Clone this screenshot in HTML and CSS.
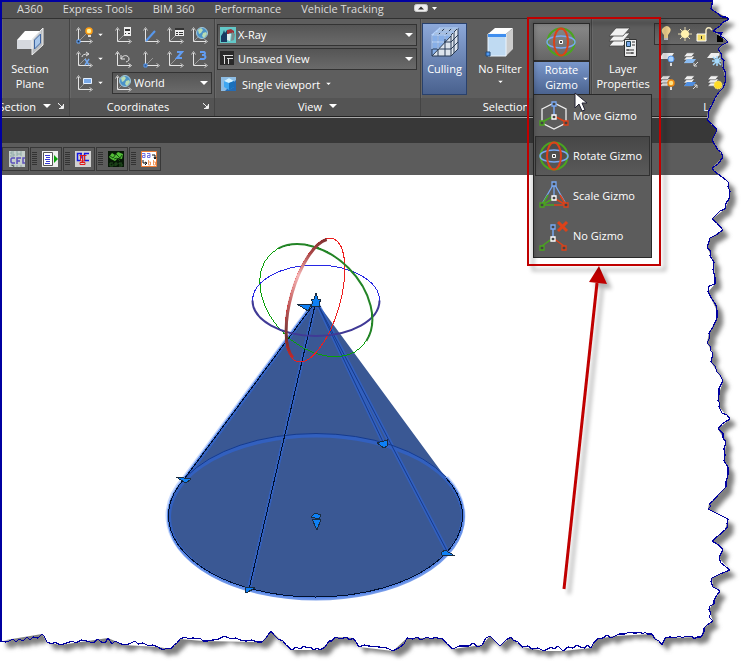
FILE: index.html
```html
<!DOCTYPE html>
<html lang="en">
<head>
<meta charset="utf-8">
<title>Gizmo selection</title>
<link rel="stylesheet" href="styles.css">
</head>
<body>
<svg class="defs" aria-hidden="true">
  <defs>
    <symbol id="axes" viewBox="0 0 17 17"><path d="M2.500 2v12.500H15" fill="none" stroke="#e4e4e4"/><path d="M.5 3.500 2.500.5l2 3M13.500 12.500l3 2-3 2" fill="none" stroke="#c8c8c8"/><path d="m3 14 7-7" stroke="#999" fill="none"/></symbol>
    <symbol id="globe" viewBox="0 0 12 12"><circle cx="6" cy="6" r="5.500" fill="#4b93c8" stroke="#a3c9dd"/><path d="M2 3 5 1l2 2-2 3-2 1zM7 6l3-1 1 2-3 4-2-2z" fill="#b9dcb2"/></symbol>
    <symbol id="rotate" viewBox="0 0 30 30"><circle cx="15" cy="15" r="13.500" fill="none" stroke="#4aa51f" stroke-width="2"/><ellipse cx="15" cy="15" rx="14" ry="6" fill="none" stroke="#78a8f2" stroke-width="1.500"/><ellipse cx="15" cy="15" rx="7" ry="13.500" fill="none" stroke="#dc4219" stroke-width="2"/><path d="M13.500 13.500h3v3h-3z" fill="#444" stroke="#fff"/></symbol>
    <symbol id="sheets" viewBox="0 0 20 20"><g fill="#f0f0f0" stroke="#444" stroke-width=".8"><path d="m1 18 5-6h12l-5 6z"/><path d="m1 13 5-6h12l-5 6z"/><path d="m1 8 5-6h12l-5 6z"/></g></symbol>
    <symbol id="down" viewBox="0 0 8 5"><path d="M0 0h8L4 4z" fill="#fff"/></symbol>
    <symbol id="launch" viewBox="0 0 6 6"><path d="M0 1.500V.5h1M1 1l3 3M5.500 1v4.500H1" fill="none" stroke="#eee"/><path d="M5 2v3H2z" fill="#eee"/></symbol>
  </defs>
</svg>
<div class="stage">
  <header class="app">
    <nav class="tabs">
      <a href="#a360">A360</a><a href="#express">Express Tools</a><a href="#bim">BIM 360</a><a href="#performance">Performance</a><a href="#vehicle">Vehicle Tracking</a>
      <button class="pill" aria-label="Minimize ribbon"><svg width="24" height="9" viewBox="0 0 24 9"><rect x=".5" y=".5" width="13" height="7" rx="2" fill="#eee" stroke="#ccc"/><path d="m4 5.500 3-3 3 3z" fill="#333"/><path d="M18 3h5l-2.500 3z" fill="#fff"/></svg></button>
    </nav>
    <div class="ribbon">
      <section class="panel section">
        <div class="body">
          <button class="big"><svg width="30" height="30" viewBox="0 0 30 30"><path d="M2 13 10 4h16l-8 9z" fill="#fff"/><path d="M2 13h16v9H2z" fill="#d5d8de"/><path d="m18 13 8-9v9l-8 9z" fill="#aaa"/><path d="m17 12 11-11v17L17 28z" fill="#d9dde2" fill-opacity=".75" stroke="#eee"/><path d="m19.500 13 6-6v9l-6 6z" fill="#a9c7ea" stroke="#3e65a0"/></svg><span>Section<br>Plane</span></button>
        </div>
        <div class="title"><span>Section</span><svg width="8" height="5"><use href="#down"/></svg><svg width="6" height="6"><use href="#launch"/></svg></div>
      </section>
      <section class="panel coords">
        <div class="body coord-grid">
          <button class="tool wide" aria-label="UCS"><svg width="17" height="17" viewBox="0 0 17 17"><use href="#axes" width="17" height="17"/><path d="M1 13h3v3H1z" fill="#234" stroke="#62a5ff"/><circle cx="13" cy="4" r="3" fill="#fff29b" stroke="#ff9d14" stroke-width="1.500"/><path d="M12 8h3v2h-3z" fill="#ddd"/></svg><svg class="tiny" viewBox="0 0 8 5"><use href="#down"/></svg></button>
          <button class="tool" aria-label="Named UCS"><svg width="17" height="17" viewBox="0 0 17 17"><use href="#axes"/><path d="M9 0h7v9H9z" fill="#eee"/><path d="M10 2h5v2h-5zM10 6h1v1h-1zM13 6h2v1h-2z" fill="#333"/></svg></button>
          <button class="tool" aria-label="World UCS"><svg width="17" height="17"><use href="#axes"/><path d="m3 14 9-10" stroke="#5798ed" stroke-width="2"/></svg></button>
          <button class="tool" aria-label="UCS list"><svg width="17" height="17"><use href="#axes"/><path d="M8 1h9v8H8z" fill="#eee"/><path d="M8 1h9v2H8zM9 5h2v1H9zM12 5h4v1h-4zM9 7h2v1H9zM12 7h4v1h-4z" fill="#333"/></svg></button>
          <button class="tool" aria-label="World"><svg width="17" height="17"><use href="#axes"/><use href="#globe" x="5" width="12" height="12"/></svg></button>
          <button class="tool wide" aria-label="Rotate X"><svg width="17" height="17"><use href="#axes"/><path d="M6 6q0-3 6-3M10 1l3 2-3 2" fill="none" stroke="#e4e4e4"/><path d="m9 8 4 6m0-6-4 6" fill="none" stroke="#72a8ef" stroke-width="1.500"/></svg><svg class="tiny" viewBox="0 0 8 5"><use href="#down"/></svg></button>
          <button class="tool" aria-label="Previous UCS"><svg width="17" height="17"><path d="M2.500 2v12.500H15M.5 3.500 2.500.5l2 3M13.500 12.500l3 2-3 2M6 4v4h4M6 8c2-5 8-4 8 0 0 2-1 2-3 3" fill="none" stroke="#e4e4e4"/></svg></button>
          <button class="tool" aria-label="Origin"><svg width="17" height="17"><use href="#axes"/><path d="M1 13h3v3H1z" fill="#355b91" stroke="#5798ed"/></svg></button>
          <button class="tool" aria-label="Z axis vector"><svg width="17" height="17"><use href="#axes"/><path d="M10 1h5l-5 6h5" fill="none" stroke="#629df2" stroke-width="2"/></svg></button>
          <button class="tool" aria-label="3 point"><svg width="17" height="17"><use href="#axes"/><path d="M9 1h4q2 1 0 3h-2 2q3 2 0 4H9" fill="none" stroke="#629df2" stroke-width="2"/></svg></button>
          <button class="tool wide" aria-label="View UCS"><svg width="17" height="17"><use href="#axes"/><path d="M7.500 3.500h8v5h-8z" fill="#79a9e8" stroke="#e5f1ff"/></svg><svg class="tiny" viewBox="0 0 8 5"><use href="#down"/></svg></button>
          <label class="combo world"><svg class="lead" width="17" height="17"><use href="#axes"/><use href="#globe" x="4" width="12" height="12"/></svg><select aria-label="Coordinate system"><option>World</option></select><svg class="caret" width="8" height="5"><use href="#down"/></svg></label>
        </div>
        <div class="title"><span class="grow">Coordinates</span><svg width="6" height="6"><use href="#launch"/></svg></div>
      </section>
      <section class="panel view">
        <div class="body view-body">
          <label class="combo"><svg class="lead" width="16" height="16" viewBox="0 0 16 16"><path d="M0 0h16v16H0z" fill="#62c8c8"/><path d="M1 15V9l2-3 1-3 1 3 2-3v12z" fill="#183b62"/><path d="m7 3 4-1 3 2v3l-4-1-3 2z" fill="#9d3438"/><path d="M7 7h4l-1 7-3-1z" fill="#ddf0ee"/><path d="m12 5 3 2-1 6-3 1z" fill="#7b8c8c"/></svg><select aria-label="Visual style"><option>X-Ray</option></select><svg class="caret" width="8" height="5"><use href="#down"/></svg></label>
          <label class="combo"><svg class="lead" width="14" height="14" viewBox="0 0 14 14"><path d="M0 0h14v14H0z" fill="#292929"/><path d="M3 4.500h10M4.500 4v9M7 7.500h6M8.500 7v6" stroke="#ddd"/></svg><select aria-label="Saved view"><option>Unsaved View</option></select><svg class="caret" width="8" height="5"><use href="#down"/></svg></label>
          <button class="single"><svg width="15" height="14" viewBox="0 0 15 14"><path d="M0 0h15v14H0z" fill="#236bb5"/><path d="M0 0h15v3L4 14H0z" fill="#8dbce3"/><path d="m3 4 5-3 5 3v6l-5 3-5-3z" fill="#3fa7f1"/><path d="m3 4 5-3 5 3-5 2z" fill="#d3f1ff"/><path d="M8 6v7l5-3V4z" fill="#1a71bb"/></svg>Single viewport<svg class="tiny" viewBox="0 0 8 5"><use href="#down"/></svg></button>
        </div>
        <div class="title"><span>View</span><svg width="8" height="5"><use href="#down"/></svg></div>
      </section>
      <section class="panel selection">
        <div class="body select-body">
          <button class="big culling"><svg width="30" height="30" viewBox="0 0 30 30"><path d="M2 8 10 1h18v21l-7 7H2z" fill="#abc0dc"/><path d="M2 29V8h19z" fill="#87afe8"/><path d="M2 29 21 9v20zM21 8l7-7v21l-7 7z" fill="#dce4ed"/><path d="M2 8h19v21H2zM2 15h19M2 22h19M8 8v21M15 8v21M2 8l8-7h18l-7 7M5 5h19M8 8l7-7M15 8l7-7M28 1v21l-7 7M24 5v21M21 15l7-7M21 22l7-7M2 29 21 9" fill="none" stroke="#293b54"/><path d="M2 22V8h19M2 15h12M8 22V8M15 12V8M2 8l8-7h18M5 5h19" fill="none" stroke="#b7d5ff" stroke-width="1.300"/></svg><span>Culling</span></button>
          <button class="big filter"><svg width="30" height="30" viewBox="0 0 30 30"><path d="m3 7 7-6h18l-7 6z" fill="#fff"/><path d="m21 7 7-6v21l-7 7z" fill="#ccc"/><path d="M3 7h18v22H3z" fill="#bfdaf2" stroke="#eaf5ff"/><path d="M3 7h18v3H3z" fill="#3f8eef"/><path d="M1 25h4v4H1z" fill="#4c98f4" stroke="#224977"/></svg><span>No Filter</span><svg class="tiny" viewBox="0 0 8 5"><use href="#down"/></svg></button>
          <div class="gizmo">
            <button class="gizmo-top" aria-label="Rotate Gizmo"><svg width="30" height="30"><use href="#rotate"/></svg></button>
            <button class="gizmo-label">Rotate<br>Gizmo<svg class="tiny" viewBox="0 0 8 5"><use href="#down"/></svg></button>
            <div class="menu">
              <button><svg width="30" height="30" viewBox="0 0 30 30"><path d="m3 8 12-6 12 6v14l-12 6-12-6z" fill="none" stroke="#eee" stroke-width="1.300"/><path d="M15 3v12" stroke="#78a8f2" stroke-width="1.500"/><path d="m15 15-12 6" stroke="#4aa51f" stroke-width="1.500"/><path d="m15 15 12 6" stroke="#dc4219" stroke-width="1.500"/><g fill="#444" stroke-width="1.300"><path d="M13 1h4v4h-4z" stroke="#78a8f2"/><path d="M1 20h4v4H1z" stroke="#4aa51f"/><path d="M25 20h4v4h-4z" stroke="#dc4219"/><path d="M13 14h4v4h-4z" stroke="#fff"/></g></svg><span>Move Gizmo</span></button>
              <button class="active"><svg width="30" height="30"><use href="#rotate"/></svg><span>Rotate Gizmo</span></button>
              <button><svg width="30" height="30" viewBox="0 0 30 30"><path d="M15 4v13M14 4 3 23M16 4l11 19" fill="none" stroke="#78a8f2" stroke-width="1.300"/><path d="M15 17 3 24h12M9 14 3 24" fill="none" stroke="#4aa51f" stroke-width="1.500"/><path d="m15 17 12 7H15M21 14l6 10" fill="none" stroke="#dc4219" stroke-width="1.500"/><g fill="#444" stroke-width="1.300"><path d="M13 1h4v4h-4z" stroke="#78a8f2"/><path d="M1 22h4v4H1z" stroke="#4aa51f"/><path d="M25 22h4v4h-4z" stroke="#dc4219"/><path d="M13 15h4v4h-4z" stroke="#fff"/></g></svg><span>Scale Gizmo</span></button>
              <button><svg width="30" height="30" viewBox="0 0 30 30"><path d="M14 5v12" stroke="#78a8f2" stroke-width="1.500"/><path d="m14 17-11 8" stroke="#4aa51f" stroke-width="1.500"/><path d="m14 17 11 8" stroke="#dc4219" stroke-width="1.500"/><g fill="#444" stroke-width="1.300"><path d="M12 4h4v4h-4z" stroke="#78a8f2"/><path d="M1 25h4v4H1z" stroke="#4aa51f"/><path d="M23 25h4v4h-4z" stroke="#dc4219"/><path d="M12 16h4v4h-4z" stroke="#fff"/></g><path d="m19 1 9 9m0-9-9 9" stroke="#dc4219" stroke-width="3"/></svg><span>No Gizmo</span></button>
            </div>
            <div class="callout"></div>
            <svg class="cursor" width="14" height="21" viewBox="0 0 14 21"><path d="M1 1v15l4-4 3 7 3-1-3-7h5z" fill="#fff" stroke="#223"/></svg>
          </div>
        </div>
        <div class="title"><span>Selection</span></div>
      </section>
      <section class="panel layers">
        <div class="body layer-body">
          <button class="big"><svg width="30" height="30" viewBox="0 0 30 30"><g fill="#f2f2f2" stroke="#444" stroke-width=".8"><path d="m1 19 7-8h14l-7 8z"/><path d="m1 14 7-8h14l-7 8z"/><path d="m1 9 7-8h14l-7 8z"/></g><path d="M16.500 12.500h12v17h-12z" fill="#eee" stroke="#333"/><path d="M18.500 14.500h4v5h-4z" fill="#79a9ec" stroke="#245"/><path d="M24 15h3m-3 3h3m-9 5h8m-8 3h8m-6-4v2m4 1v2" stroke="#333"/></svg><span>Layer<br>Properties</span></button>
          <div class="layer-tools">
            <div class="state"><svg width="64" height="16" viewBox="0 0 64 16"><path d="M5 12V9q-4-4-1-7 4-4 7 0 2 3-2 7v3z" fill="#f5d791"/><path d="M5 12h4v2H5z" fill="#ccc"/><g stroke="#e9ddb2"><path d="M26 1v14M19 8h14M21 3l10 10m0-10L21 13"/></g><circle cx="26" cy="8" r="4" fill="#fff1ae"/><path d="M47 8V4q1-3 4-2l2 2" fill="none" stroke="#f3e8c0" stroke-width="1.500"/><path d="M38 8h9v7h-9z" fill="#f1da68" stroke="#fff"/><path d="M42 10h1v3h-1z" fill="#333"/><path d="M58 9h6v7h-6z"/></svg></div>
            <div class="layer-row">
              <button aria-label="Layer off"><svg width="16" height="16"><path d="m0 8 4-6h11l-4 6z" fill="#eee"/><circle cx="12" cy="8" r="3" fill="#a7d2ff" stroke="#5797ec"/><path d="M11 12h2v3h-2z" fill="#ddd"/></svg></button>
              <button aria-label="Layer isolate"><svg width="16" height="16"><use href="#sheets" width="13" height="14"/><path d="m1 12 3-4h9l-3 4z" fill="#8bbcf2"/><path d="m15 11-4 4v-3m0 3h3" stroke="#ddd" fill="none"/></svg></button>
              <button aria-label="Layer freeze"><svg width="16" height="16"><path d="m0 7 4-5h10l-4 5z" fill="#eee"/><path d="M10 5v10M5 10h10M6 6l8 8m0-8-8 8" stroke="#a6dcff" stroke-width="1.500"/></svg></button>
            </div>
            <div class="layer-row">
              <button aria-label="Layers on"><svg width="16" height="16"><use href="#sheets" width="13" height="14"/><circle cx="12" cy="9" r="3" fill="#ffe383" stroke="#f18b12" stroke-width="1.500"/><path d="M11 13h2v3h-2z" fill="#ddd"/></svg></button>
              <button aria-label="Layer unisolate"><svg width="16" height="16"><use href="#sheets" width="13" height="14"/><path d="m1 12 3-4h9l-3 4z" fill="#4f8ee0"/><path d="m10 15 4-4v3m0-3h-3" stroke="#ddd" fill="none"/></svg></button>
              <button aria-label="Thaw layers"><svg width="16" height="16"><use href="#sheets" width="13" height="14"/><circle cx="11" cy="11" r="4" fill="#ffdc28" stroke="#fff1a2" stroke-dasharray="1 1"/></svg></button>
            </div>
          </div>
        </div>
        <div class="title"><span>Layers</span></div>
      </section>
    </div>
    <div class="strip"></div>
    <div class="toolbar">
      <button aria-label="Shape codes"><svg width="16" height="16" viewBox="0 0 16 16"><path d="M0 0h16v16H0z" fill="#c5cfcd"/><path d="M5 1H2v2h3v2H1M8 0v5m4-5v5M8 3h4" fill="none" stroke="#8faaa6"/><path d="M6 7H3L2 8v3l1 1h3M8 13V7h4M8 10h3M16 7h-2v5h2" fill="none" stroke="#5c50bb" stroke-width="1.500"/><path d="M2 14h3v2m3-2v2m4-2v2" stroke="#91a2a0"/></svg></button>
      <button class="grip" aria-label="Run list"><svg width="16" height="16" viewBox="0 0 16 16"><path d="M0 0h16v16H0z" fill="#eee"/><path d="M1.500 1.500h9v13h-9z" fill="#fff" stroke="#555"/><path d="M3 4.500h5M4 6.500h4M3 8.500h5M4 10.500h4M3 12.500h5" stroke="#3538d5"/><path d="m12 4 4 4-4 4z" fill="#07a207"/></svg></button>
      <button class="grip" aria-label="Text overlap"><svg width="16" height="16" viewBox="0 0 16 16"><path d="M0 0h16v16H0z" fill="#d2d2d2"/><path d="M7 2.500H2.500v7H5M9 2.500h5M9.500 2.500v7H14M6 2.500v5" fill="none" stroke="#1418e3" stroke-width="1.500"/><path d="M4.500 4.500h7M5.500 5v5h4V5M7.500 5v7M5 11.500h5v2H5z" fill="none" stroke="#e21919"/></svg></button>
      <button class="grip" aria-label="GPS"><svg width="16" height="16" viewBox="0 0 16 16"><path d="M0 0h16v16H0z" fill="#061806"/><path d="m1 6 3-4 3 2 3-3 5 2-1 5-4-1-3 3-4-2z" fill="#53bd37"/><path d="m2 5 3 2 3-4 4 4 2-3M6 8l3-1 3 3" fill="none" stroke="#174c12"/><path d="M5 12H2v3h3v-2M7 15v-3h2v2H7m7-2h-3v1h3v2h-3" fill="none" stroke="#23511e"/></svg></button>
      <button class="grip" aria-label="Find and replace"><svg width="16" height="16" viewBox="0 0 16 16"><path d="M.5.500h15v15H.5z" fill="#fff" stroke="#ee7d37"/><path d="M1 2.500h3v4H1.500v-2H4M6 2.500h3v4H6.500v-2H9" fill="none" stroke="#7470e4"/><path d="M7.500 9v5h2v-3h-2M12.500 9v5h2v-3h-2" fill="none" stroke="#f09a60"/><path d="M11 4h3v4m-1-2 1 2 1-2M2 9v3h3M4 11l2 1-2 2" fill="none" stroke="#111"/></svg></button>
    </div>
  </header>
  <main>
    <svg class="model" viewBox="0 175 743 486" role="img" aria-label="Selected cone with rotate gizmo">
      <defs>
        <filter id="soft" x="-20%" y="-20%" width="140%" height="140%"><feGaussianBlur stdDeviation="2"/></filter>
        <linearGradient id="redBand" x1="0" y1="0" x2="0" y2="1"><stop stop-color="#7c3030"/><stop offset=".15" stop-color="#a84545"/><stop offset=".35" stop-color="#f5b5b5"/><stop offset=".6" stop-color="#c05a5a"/><stop offset=".85" stop-color="#703030"/><stop offset="1" stop-color="#c82828"/></linearGradient>
      </defs>
      <g fill="none" stroke="#6d9bf5"><path d="M316 301 185 478A147 81.500 0 1 0 446 478" stroke-width="6" opacity=".35"/><path d="M316 301 185 478A147 81.500 0 1 0 446 478" stroke-width="3" opacity=".6"/></g>
      <path d="M316 301 185 478A147 81.500 0 1 0 446 478Z" fill="#3a5894"/>
      <g fill="none" stroke="#2e66dc" stroke-width="4" opacity=".6">
        <ellipse cx="316" cy="517" rx="147" ry="81.500"/>
        <path d="M316 301 185 479M316 301 249 589M316 301l68 143M316 301l132 252"/>
      </g>
      <g fill="none" stroke="#163b8c"><path d="M186 477A147 81.500 0 0 1 446 477M316 301l68 143M316 301l132 252"/></g>
      <g fill="none" stroke="#00102e" shape-rendering="crispEdges"><path d="M316 301 185 478A147 81.500 0 1 0 446 478M316 301 249 589"/></g>
      <g fill="#0e80f5" stroke="#182c42" shape-rendering="crispEdges">
        <path d="m176 477 15 2-5 4zM377 443l10-3v6l-3 2zM441 553l4-3 10 6-13-1zM245 587l10 1-9 5zM311 517l4-4 6 2-2 4zM312 519h9l-4 11zM297 304l14 1-3 6z"/>
        <path d="m316 293 2 6 3 1-2 3 1 3h-9l2-4-2-2 3-1z"/>
      </g>
      <g fill="none" shape-rendering="crispEdges">
        <ellipse cx="316" cy="300.500" rx="63.500" ry="35.500" stroke="#2727e4"/>
        <ellipse cx="316" cy="300.500" rx="65" ry="46" transform="rotate(45 316 300.500)" stroke="#08a008"/>
        <ellipse cx="315" cy="300" rx="25" ry="64" transform="rotate(16 315 300)" stroke="#ee1e1e"/>
      </g>
      <g fill="none">
        <ellipse cx="316" cy="300.500" rx="63.500" ry="35.500" stroke="#403a96" stroke-width="2" pathLength="100" stroke-dasharray="50 50"/>
        <ellipse cx="316" cy="300.500" rx="65" ry="46" transform="rotate(45 316 300.500)" stroke="#238426" stroke-width="2" pathLength="100" stroke-dasharray="0 53 45 2"/>
        <ellipse cx="315" cy="300" rx="24" ry="63" transform="rotate(16 315 300)" stroke="url(#redBand)" stroke-width="3" pathLength="100" stroke-dasharray="0 27 46 27"/>
      </g>
      <g transform="translate(5 5)" opacity=".3" filter="url(#soft)"><path d="m564 589 33-306" stroke="#000" stroke-width="3"/><path d="m599 266-10 16 18 2z"/></g>
      <path d="m564 589 33-306" stroke="#c00000" stroke-width="3"/><path d="m599 266-10 16 18 2z" fill="#c00000"/>
    </svg>
  </main>
  <svg class="torn" viewBox="0 0 743 661" preserveAspectRatio="none" aria-hidden="true">
    <defs>
      <path id="edge" d="M713 0 712 4 711 9 714 11 717 13 722 17 726 17 729 19 722 23 720 26 717 28 713 31 718 33 722 33 720 36 724 38 728 42 722 45 718 49 722 55 721 58 724 60 723 68 726 73 725 77 726 80 723 88 719 92 715 98 712 105 708 112 709 116 707 120 712 124 717 130 712 140 718 150 721 152 723 157 718 164 712 168 714 171 722 177 726 180 729 183 728 187 730 191 729 199 726 203 725 209 720 211 712 219 717 223 723 230 716 235 710 238 709 242 707 247 711 252 710 256 714 262 713 270 715 277 715 284 709 286 708 292 712 299 716 305 717 311 717 318 713 327 709 333 710 337 707 343 711 347 710 350 713 353 711 362 715 366 717 372 720 375 723 381 719 388 719 394 718 401 720 403 719 407 722 413 727 415 730 419 722 424 718 429 723 433 723 438 726 442 724 449 725 455 724 461 728 467 728 475 726 482 726 487 718 495 713 501 709 504 711 506 708 509 720 515 728 519 727 524 728 526 725 530 718 536 712 541 717 544 723 549 719 558 721 563 730 570 720 574 712 578 711 582 713 587 717 589 720 591 717 595 714 600 714 604 710 606 709 610 711 613 709 617 713 621 707 625 704 628 704 632 701 637 697 637 694 639 692 636 690 637 686 636 682 638 680 636 677 637 674 638 670 637 665 638 662 645 659 641 655 639 652 634 647 634 645 632 643 634 640 632 637 633 633 633 629 632 625 634 619 634 615 636 611 638 607 635 603 638 597 639 593 644 591 648 587 645 585 648 580 647 577 645 573 648 568 647 563 651 558 646 554 649 551 647 544 651 538 648 532 649 528 646 522 647 518 642 513 640 511 637 506 640 503 643 500 646 495 641 490 636 486 638 482 645 478 647 473 643 469 646 459 646 453 649 447 644 442 638 439 639 436 637 431 639 427 637 421 640 417 637 413 639 407 638 404 644 400 647 393 651 387 648 379 647 369 646 364 645 359 647 356 642 353 638 350 640 346 637 341 639 335 637 332 641 329 641 325 647 320 650 317 648 314 650 310 647 307 648 304 646 300 649 296 647 292 650 286 645 283 641 278 639 274 635 271 631 266 638 262 642 257 642 252 640 246 641 240 640 236 638 232 639 229 638 224 636 219 639 213 640 207 641 203 641 200 638 197 639 193 638 189 639 185 637 180 639 177 643 174 645 171 649 167 648 163 650 158 647 153 645 149 646 143 643 138 644 135 641 129 644 124 645 119 643 115 641 112 644 108 638 105 643 101 642 98 639 93 643 87 641 81 640 76 643 72 641 64 644 60 645 55 642 52 644 47 642 44 636 42 634 38 638 33 637 30 640 27 637 23 641 19 639 16 642 13 639 9 641 6 642 0 641"/>
      <clipPath id="outside"><path clip-rule="evenodd" d="M0 0H743V661H0ZM713 0 711 9 729 19 713 31 728 42 718 49 726 80 708 112 707 120 717 130 712 140 723 157 712 168 729 183 729 199 725 209 712 219 723 230 710 238 707 247 714 262 715 284 708 292 717 311 717 318 709 333 707 343 713 353 711 362 723 381 719 394 719 407 730 419 718 429 726 442 724 461 728 467 726 487 709 504 708 509 728 519 725 530 712 541 723 549 719 558 730 570 712 578 713 587 720 591 709 610 713 621 704 628 701 637 665 638 662 645 652 634 615 636 597 639 591 648 563 651 544 651 522 647 511 637 500 646 490 636 482 645 453 649 442 638 407 638 393 651 359 647 353 638 335 637 320 650 292 650 271 631 262 642 203 641 180 639 171 649 158 647 124 645 108 638 60 645 47 642 42 634 0 641V0Z"/></clipPath>
      <filter id="shadow"><feGaussianBlur stdDeviation="2"/></filter>
    </defs>
    <g clip-path="url(#outside)">
      <path d="M0 0H743V661H0Z" fill="#fff"/>
      <g transform="translate(6 6)" fill="#808080" filter="url(#shadow)"><use href="#edge"/><path d="M0 0H713L0 641Z"/></g>
    </g>
    <use href="#edge" fill="none" stroke="#0000a0" stroke-width="1.200" shape-rendering="crispEdges"/>
    <path d="M713 1H1v640" fill="none" stroke="#0000a0" stroke-width="2"/>
  </svg>
</div>
</body>
</html>
```
FILE: styles.css
```css
* { box-sizing: border-box; }

body {
  margin: 0;
  background: #fff;
  color: #fff;
  font: 11px/15px "Open Sans", "Noto Sans", sans-serif;
}

button {
  margin: 0;
  padding: 0;
  border: 0;
  background: none;
  color: inherit;
  font: inherit;
}

svg { display: block; flex: none; }
.defs { position: absolute; width: 0; height: 0; }

.stage {
  position: relative;
  display: flex;
  flex-direction: column;
  min-height: 100vh;
  overflow: hidden;
}

.app { padding: 2px 0 0 2px; background: #5c5c5c; }

.tabs {
  display: flex;
  align-items: center;
  gap: 20px;
  height: 17px;
  padding: 0 15px 4px;
  border-bottom: 1px solid #303030;
  background: #535353;
}
.tabs a { color: #ddd; text-decoration: none; white-space: nowrap; }
.pill { margin-left: 10px; }

.ribbon { display: flex; background: #5e5e5e; border-bottom: 1px solid #222; }

.panel {
  display: flex;
  flex: none;
  flex-direction: column;
  border-right: 1px solid #444;
  box-shadow: inset 1px 0 #686868;
}
.body { height: 79px; padding-top: 4px; }
.title {
  display: flex;
  align-items: center;
  justify-content: center;
  gap: 7px;
  height: 18px;
  padding-bottom: 2px;
  background: #545454;
}
.title .grow { flex: 1; text-align: center; }

.section { width: 68px; }
.section .title { justify-content: flex-end; padding-right: 5px; }
.coords { width: 145px; }
.coords .title { padding-right: 5px; padding-left: 10px; }
.view { width: 206px; }
.selection { width: 171px; }
.layers { flex: 1; border-right: 0; }
.layers .title { padding-left: 105px; }

.big {
  display: flex;
  flex-direction: column;
  align-items: center;
  gap: 4px;
  padding-top: 4px;
}
.section .big { width: 56px; }

.tiny { width: 5px; height: 4px; }

.coord-grid {
  display: grid;
  grid-template-columns: 39px 28px 24px 24px 18px;
  grid-template-rows: repeat(3, 24px);
  align-items: center;
  padding: 4px 0 0 6px;
}
.tool { display: flex; align-items: center; }
.tool.wide { gap: 5px; }

.combo { position: relative; display: block; }
.combo select {
  display: block;
  width: 100%;
  height: 22px;
  padding: 0 20px 2px;
  border: 1px solid #333;
  border-radius: 0;
  outline: 0;
  background: linear-gradient(#555, #6a6a6a);
  color: #fff;
  font: inherit;
  appearance: none;
}
.combo .lead { position: absolute; left: 3px; top: 3px; }
.combo .caret { position: absolute; right: 4px; top: 9px; }
.world { grid-column: 2 / -1; width: 100px; margin-left: -3px; }
.world select { padding-left: 21px; }

.view-body { display: flex; flex-direction: column; gap: 2px; padding: 5px 3px 0 2px; }
.single { display: flex; align-items: center; gap: 6px; height: 24px; padding: 0 0 0 4px; }

.select-body { display: flex; }
.select-body .big { height: 72px; }
.culling {
  width: 45px;
  margin-left: 1px;
  border: 1px solid #29416c;
  background: linear-gradient(#8da9da, #49618e);
}
.select-body .culling { padding-top: 3px; }
.filter { width: 66px; }
.gizmo { position: relative; width: 57px; }
.gizmo-top, .gizmo-label { position: relative; display: block; width: 100%; border: 1px solid #2e2e2e; }
.gizmo-top { height: 38px; padding: 0 0 0 12px; background: linear-gradient(#8a8a8a, #666); }
.gizmo-label { height: 34px; padding-bottom: 2px; background: linear-gradient(#7997cb, #4b638f); }
.gizmo-label .tiny { position: absolute; right: 1px; top: 15px; }

.menu {
  position: absolute;
  z-index: 2;
  top: 71px;
  left: 0;
  width: 119px;
  padding: 1px;
  border: 1px solid #292929;
  background: #5c5c5c;
}
.menu button {
  display: flex;
  align-items: center;
  gap: 4px;
  width: 100%;
  height: 40px;
  padding: 0 3px;
  border: 1px solid transparent;
  white-space: nowrap;
}
.menu span { padding-bottom: 2px; }
.menu .active { border-color: #303030; background: linear-gradient(#474747, #5a5a5a); }
.callout {
  position: absolute;
  z-index: 3;
  top: -6px;
  left: -6px;
  width: 134px;
  height: 249px;
  border: 2px solid #c00000;
  filter: drop-shadow(5px 5px 2px rgb(0 0 0 / 35%));
  pointer-events: none;
}
.cursor { position: absolute; z-index: 4; top: 69px; left: 41px; }

.layer-body { display: flex; }
.layer-body .big { width: 62px; }
.layer-tools { flex: 1; }
.state { height: 22px; padding: 2px 0 0 4px; border: 1px solid #333; background: linear-gradient(#555, #6a6a6a); }
.layer-row { display: flex; gap: 8px; height: 23px; padding: 4px 0 0 5px; }

.strip { height: 26px; border-top: 1px solid #aaa; background: #383838; }

.toolbar { display: flex; align-items: center; gap: 1px; height: 32px; }
.toolbar button {
  display: flex;
  align-items: center;
  justify-content: flex-end;
  width: 27px;
  height: 24px;
  padding-right: 3px;
  border: 1px solid #383838;
  background: #5c5c5c;
}
.toolbar .grip { width: 32px; }
.toolbar .grip::before {
  content: "";
  width: 5px;
  height: 14px;
  margin-right: 5px;
  background: repeating-linear-gradient(#333 0 1px, transparent 1px 2px);
}

main { flex: 1; }
.model { width: 100%; height: auto; }

.torn {
  position: absolute;
  z-index: 5;
  inset: 0;
  width: 100%;
  height: 100%;
  pointer-events: none;
}
```
